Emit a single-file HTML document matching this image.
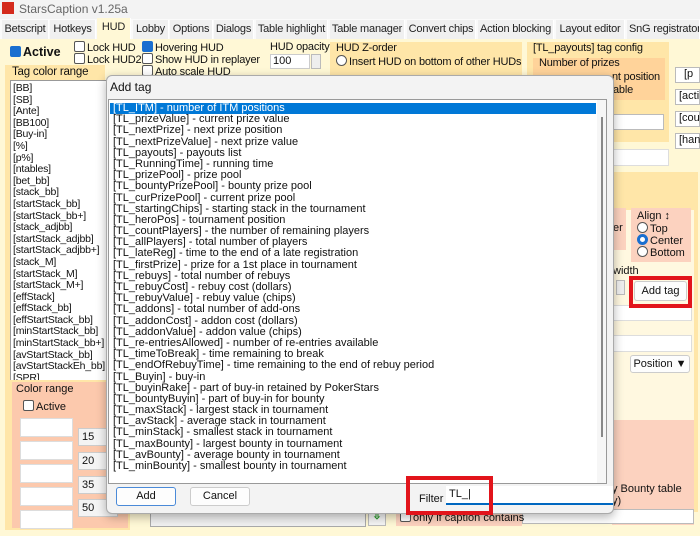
<!DOCTYPE html>
<html><head><meta charset="utf-8"><style>
*{box-sizing:border-box;margin:0;padding:0}
body{width:700px;height:536px;overflow:hidden;position:relative;background:#fff8d6;font-family:"Liberation Sans",sans-serif;font-size:11px;color:#111}
.a{position:absolute;white-space:nowrap}
.tb{background:#f3f3f3}
.tab{position:absolute;top:20px;height:19px;background:#f0f0f0;border-right:1px solid #fff;font-size:11px;letter-spacing:-0.2px;line-height:19px;text-align:center;color:#222;overflow:hidden;white-space:nowrap}
.cb{display:inline-block;width:11px;height:11px;border:1px solid #555;border-radius:2px;background:#fff;vertical-align:-1px;margin-right:2px}
.cbon{background:#1a6fd0;border-color:#1a6fd0}
.ra{display:inline-block;width:11px;height:11px;border:1px solid #555;border-radius:50%;background:#fff;vertical-align:-1px;margin-right:2px}
.box{position:absolute;background:#fff;border:1px solid #bbb}
.btn{position:absolute;background:#fdfdfd;border:1px solid #ccc;border-radius:3px;text-align:center;font-size:11px}
.ll{position:absolute;left:2px;line-height:11.6px;font-size:10.5px;letter-spacing:-0.2px}
.dl div{height:11.2px;line-height:11.2px;padding-left:3px;font-size:11px}
.red{position:absolute;border:4px solid #e2141b}
.t11{font-size:11px;letter-spacing:-0.2px}
</style></head><body>
<div class="a tb" style="left:0;top:0;width:700px;height:19px"></div>
<div class="a" style="left:2px;top:2px;width:12px;height:12px;background:#d42a1c"></div>
<div class="a" style="left:19px;top:2px;font-size:12px;color:#666">StarsCaption v1.25a</div>
<div class="a" style="left:0;top:19px;width:700px;height:20px;background:#fafafa"></div>
<div class="tab" style="left:2px;width:47px">Betscript</div>
<div class="tab" style="left:50px;width:46px">Hotkeys</div>
<div class="tab" style="left:97px;width:34px;background:#fff8d6;top:18px;height:21px">HUD</div>
<div class="tab" style="left:133px;width:36px">Lobby</div>
<div class="tab" style="left:170px;width:43px">Options</div>
<div class="tab" style="left:214px;width:40px">Dialogs</div>
<div class="tab" style="left:256px;width:72px">Table highlight</div>
<div class="tab" style="left:330px;width:75px">Table manager</div>
<div class="tab" style="left:407px;width:69px">Convert chips</div>
<div class="tab" style="left:478px;width:76px">Action blocking</div>
<div class="tab" style="left:556px;width:69px">Layout editor</div>
<div class="tab" style="left:627px;width:73px;text-align:left;padding-left:2px">SnG registrator</div>

<div class="a" style="left:10px;top:45px;font-size:12.5px;font-weight:bold"><span class="cb cbon"></span>Active</div>
<div class="a t11" style="left:74px;top:41px"><span class="cb"></span>Lock HUD</div>
<div class="a t11" style="left:74px;top:53px"><span class="cb"></span>Lock HUD2</div>
<div class="a t11" style="left:142px;top:41px"><span class="cb cbon"></span>Hovering HUD</div>
<div class="a t11" style="left:142px;top:53px"><span class="cb"></span>Show HUD in replayer</div>
<div class="a t11" style="left:142px;top:65px"><span class="cb"></span>Auto scale HUD</div>
<div class="a t11" style="left:270px;top:41px">HUD opacity</div>
<div class="box" style="left:270px;top:54px;width:40px;height:15px;border-color:#ccc;padding-left:2px">100</div>
<div class="box" style="left:311px;top:54px;width:10px;height:15px;background:#eee"></div>
<div class="a" style="left:330px;top:42px;width:192px;height:34px;background:#ffe6a8"></div>
<div class="a t11" style="left:336px;top:42px">HUD Z-order</div>
<div class="a t11" style="left:336px;top:55px"><span class="ra"></span>Insert HUD on bottom of other HUDs</div>
<div class="a" style="left:527px;top:42px;width:142px;height:100px;background:#ffe6a8"></div>
<div class="a t11" style="left:533px;top:42px">[TL_payouts] tag config</div>
<div class="a" style="left:533px;top:58px;width:132px;height:42px;background:#ffd39a"></div>
<div class="a t11" style="left:539px;top:57px">Number of prizes</div>
<div class="a t11" style="left:612px;top:71px">nt position</div>
<div class="a t11" style="left:613px;top:84px">able</div>
<div class="box" style="left:612px;top:114px;width:52px;height:16px"></div>
<div class="box" style="left:612px;top:149px;width:57px;height:17px;border-color:#ddd"></div>
<div class="box" style="left:675px;top:67px;width:25px;height:16px;padding-left:8px">[p</div>
<div class="box" style="left:675px;top:89px;width:25px;height:16px;padding-left:3px">[acti</div>
<div class="box" style="left:675px;top:111px;width:25px;height:16px;padding-left:3px">[cou</div>
<div class="box" style="left:675px;top:133px;width:25px;height:16px;padding-left:3px">[hand</div>
<div class="a" style="left:612px;top:172px;width:86px;height:340px;background:#ffe6a8"></div>
<div class="a" style="left:612px;top:210px;width:82px;height:305px;background:#fff8e0"></div>
<div class="a" style="left:612px;top:208px;width:14px;height:42px;background:#fcd2bf"></div>
<div class="a" style="left:613px;top:222px">er</div>
<div class="a" style="left:631px;top:208px;width:60px;height:54px;background:#fcd2bf"></div>
<div class="a" style="left:637px;top:210px">Align ↕</div>
<div class="a" style="left:637px;top:222px"><span class="ra"></span>Top</div>
<div class="a" style="left:637px;top:234px"><span class="ra" style="border:3px solid #1a6fd0"></span>Center</div>
<div class="a" style="left:637px;top:246px"><span class="ra"></span>Bottom</div>
<div class="a" style="left:613px;top:265px">width</div>
<div class="box" style="left:616px;top:280px;width:9px;height:15px;background:#eee"></div>
<div class="btn" style="left:634px;top:281px;width:53px;height:20px;line-height:18px">Add tag</div>
<div class="box" style="left:612px;top:305px;width:80px;height:16px;border-color:#ddd"></div>
<div class="box" style="left:612px;top:335px;width:80px;height:17px;border-color:#ddd"></div>
<div class="btn" style="left:630px;top:355px;width:60px;height:18px;line-height:16px">Position ▼</div>
<div class="a" style="left:612px;top:420px;width:82px;height:105px;background:#fcd2bf"></div>
<div class="a" style="left:612px;top:483px">y Bounty table</div>
<div class="a" style="left:612px;top:495px">y)</div>
<div class="box" style="left:522px;top:509px;width:172px;height:15px"></div>

<div class="a" style="left:5px;top:65px;width:100px;height:325px;background:#ffe6a8"></div>
<div class="a t11" style="left:12px;top:66px;font-size:11.5px">Tag color range</div>
<div class="box" style="left:10px;top:80px;width:100px;height:303px;overflow:hidden;border-color:#999">
<div class="ll" style="top:2px">[BB]<br>[SB]<br>[Ante]<br>[BB100]<br>[Buy-in]<br>[%]<br>[p%]<br>[ntables]<br>[bet_bb]<br>[stack_bb]<br>[startStack_bb]<br>[startStack_bb+]<br>[stack_adjbb]<br>[startStack_adjbb]<br>[startStack_adjbb+]<br>[stack_M]<br>[startStack_M]<br>[startStack_M+]<br>[effStack]<br>[effStack_bb]<br>[effStartStack_bb]<br>[minStartStack_bb]<br>[minStartStack_bb+]<br>[avStartStack_bb]<br>[avStartStackEh_bb]<br>[SPR]</div></div>
<div class="a" style="left:5px;top:380px;width:125px;height:150px;background:#ffe6a8"></div>
<div class="a" style="left:12px;top:382px;width:116px;height:146px;background:#fcc9ad"></div>
<div class="a" style="left:16px;top:383px">Color range</div>
<div class="a" style="left:23px;top:400px"><span class="cb"></span>Active</div>
<div class="box" style="left:20px;top:418px;width:53px;height:19px;border-color:#ddd"></div>
<div class="box" style="left:20px;top:441px;width:53px;height:19px;border-color:#ddd"></div>
<div class="box" style="left:20px;top:464px;width:53px;height:19px;border-color:#ddd"></div>
<div class="box" style="left:20px;top:487px;width:53px;height:19px;border-color:#ddd"></div>
<div class="box" style="left:20px;top:510px;width:53px;height:19px;border-color:#ddd"></div>
<div class="box" style="left:78px;top:428px;width:40px;height:18px;border-color:#ccc;background:#f4f4f4;padding:2px 0 0 3px">15</div>
<div class="box" style="left:78px;top:452px;width:40px;height:18px;border-color:#ccc;background:#f4f4f4;padding:2px 0 0 3px">20</div>
<div class="box" style="left:78px;top:476px;width:40px;height:18px;border-color:#ccc;background:#f4f4f4;padding:2px 0 0 3px">35</div>
<div class="box" style="left:78px;top:499px;width:40px;height:18px;border-color:#ccc;background:#f4f4f4;padding:2px 0 0 3px">50</div>
<div class="box" style="left:150px;top:509px;width:216px;height:18px;background:#f0f0f0;border-color:#aaa"></div>
<div class="box" style="left:368px;top:508px;width:18px;height:18px;background:#f4f4f4;color:#2a9a2a;text-align:center;font-weight:bold">⇩</div>
<div class="a" style="left:396px;top:508px;width:126px;height:18px;background:#fcd2bf"></div>
<div class="a" style="left:400px;top:511px"><span class="cb"></span>only if caption contains</div>

<div class="a" style="left:106px;top:75px;width:508px;height:439px;background:#f3f3f3;border:1px solid #aaa;border-radius:6px;box-shadow:0 3px 10px rgba(0,0,0,.3)"></div>
<div class="a" style="left:110px;top:80px;font-size:12px">Add tag</div>
<div class="box" style="left:108px;top:99px;width:499px;height:385px;border-color:#999;overflow:hidden">
<div class="dl" style="position:absolute;left:1px;top:3px;width:486px">
<div style="background:#0078d7;color:#fff">[TL_ITM] - number of ITM positions</div>
<div>[TL_prizeValue] - current prize value</div>
<div>[TL_nextPrize] - next prize position</div>
<div>[TL_nextPrizeValue] - next prize value</div>
<div>[TL_payouts] - payouts list</div>
<div>[TL_RunningTime] - running time</div>
<div>[TL_prizePool] - prize pool</div>
<div>[TL_bountyPrizePool] - bounty prize pool</div>
<div>[TL_curPrizePool] - current prize pool</div>
<div>[TL_startingChips] - starting stack in the tournament</div>
<div>[TL_heroPos] - tournament position</div>
<div>[TL_countPlayers] - the number of remaining players</div>
<div>[TL_allPlayers] - total number of players</div>
<div>[TL_lateReg] - time to the end of a late registration</div>
<div>[TL_firstPrize] - prize for a 1st place in tournament</div>
<div>[TL_rebuys] - total number of rebuys</div>
<div>[TL_rebuyCost] - rebuy cost (dollars)</div>
<div>[TL_rebuyValue] - rebuy value (chips)</div>
<div>[TL_addons] - total number of add-ons</div>
<div>[TL_addonCost] - addon cost (dollars)</div>
<div>[TL_addonValue] - addon value (chips)</div>
<div>[TL_re-entriesAllowed] - number of re-entries available</div>
<div>[TL_timeToBreak] - time remaining to break</div>
<div>[TL_endOfRebuyTime] - time remaining to the end of rebuy period</div>
<div>[TL_Buyin] - buy-in</div>
<div>[TL_buyinRake] - part of buy-in retained by PokerStars</div>
<div>[TL_bountyBuyin] - part of buy-in for bounty</div>
<div>[TL_maxStack] - largest stack in tournament</div>
<div>[TL_avStack] - average stack in tournament</div>
<div>[TL_minStack] - smallest stack in tournament</div>
<div>[TL_maxBounty] - largest bounty in tournament</div>
<div>[TL_avBounty] - average bounty in tournament</div>
<div>[TL_minBounty] - smallest bounty in tournament</div>
</div>
<div class="a" style="left:488px;top:0;width:10px;height:384px;background:#f6f6f6"></div>
<div class="a" style="left:492px;top:17px;width:2px;height:320px;background:#888"></div>
</div>
<div class="btn" style="left:116px;top:487px;width:60px;height:19px;line-height:17px;border-color:#4a8ad8">Add</div>
<div class="btn" style="left:190px;top:487px;width:60px;height:19px;line-height:17px">Cancel</div>
<div class="a" style="left:419px;top:493px">Filter</div>
<div class="a" style="left:446px;top:486px;width:167px;height:19px;background:#fff;border-bottom:2px solid #0067c0;padding:2px 0 0 3px">TL_|</div>

<div class="red" style="left:629px;top:276px;width:63px;height:32px"></div>
<div class="red" style="left:406px;top:476px;width:87px;height:39px"></div>
</body></html>
